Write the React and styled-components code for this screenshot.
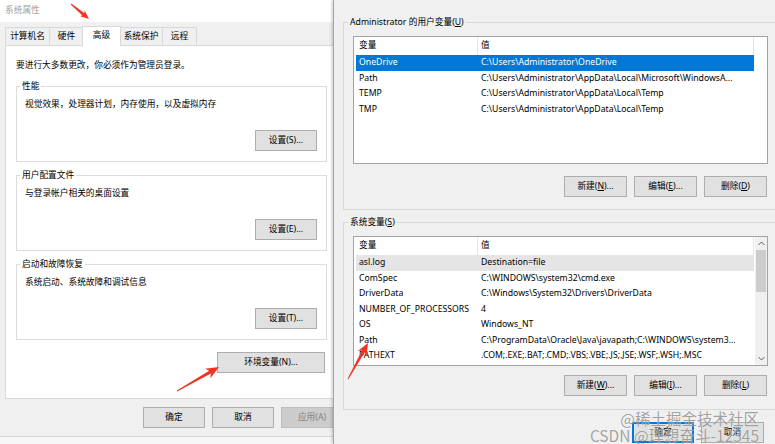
import styled, { createGlobalStyle } from "styled-components";

const GlobalStyle = createGlobalStyle`
  html, body {
    margin: 0;
    padding: 0;
  }
  body {
    width: 775px;
    height: 444px;
    overflow: hidden;
    background: #f7f7f7;
    color: #000;
    font-family: "Noto Sans", "Noto Sans CJK SC", sans-serif;
    font-size: 8.7px;
  }
`;

const Screen = styled.div`
  position: relative;
  display: flex;
  width: 775px;
  height: 444px;
  overflow: hidden;
`;

/* ---------- left: 系统属性 ---------- */

const SysWindow = styled.div`
  width: 333px;
  flex-shrink: 0;
  display: flex;
  flex-direction: column;
  overflow: hidden;
`;

const TitleBar = styled.div`
  height: 22px;
  flex-shrink: 0;
  padding-left: 5px;
  background: #fff;
  color: #a3a3a3;
  line-height: 20px;
`;

const SysBody = styled.div`
  width: 350px;
  height: 415px;
  flex-shrink: 0;
  box-sizing: border-box;
  padding: 4px 0 0 5px;
  background: #f0f0f0;
  border-bottom: 1px solid #d8d8d8;
`;

const TabStrip = styled.div`
  display: flex;
  align-items: flex-end;
  height: 19px;
`;

const Tab = styled.div`
  position: relative;
  width: ${(p) => p.$w}px;
  height: ${(p) => (p.$active ? 20 : 18)}px;
  box-sizing: border-box;
  margin: 0 ${(p) => (p.$active ? -1 : 0)}px ${(p) => (p.$active ? -1 : 0)}px
    ${(p) => (p.$active ? -2 : -1)}px;
  border: 1px solid #d9d9d9;
  border-bottom: none;
  background: ${(p) => (p.$active ? "#fff" : "#f0f0f0")};
  z-index: ${(p) => (p.$active ? 2 : 1)};
  text-align: center;
  line-height: ${(p) => (p.$active ? 16 : 17)}px;
  &:first-child {
    margin-left: 0;
  }
`;

const Panel = styled.div`
  width: 333px;
  height: 354px;
  box-sizing: border-box;
  padding: 13px 10px 0 10px;
  border: 1px solid #d9d9d9;
  background: #fff;
  display: flex;
  flex-direction: column;
`;

const Intro = styled.div`
  line-height: 12px;
  margin-bottom: 15px;
`;

const Group = styled.div`
  display: flex;
  flex-direction: column;
  width: 311px;
  height: 76px;
  box-sizing: border-box;
  margin-bottom: 13px;
  padding: 0 9px 10px 8px;
  border: 1px solid #dcdcdc;
  background: inherit;
`;

const Legend = styled.div`
  align-self: flex-start;
  margin: -7px 0 0 -5px;
  padding: 0 2px;
  line-height: 12px;
  background: inherit;
`;

const GroupText = styled.div`
  margin-top: 6px;
  line-height: 12px;
`;

const Button = styled.button`
  width: ${(p) => p.$w}px;
  height: 21px;
  flex-shrink: 0;
  box-sizing: border-box;
  padding: 0;
  border: 1px solid ${(p) => (p.$focus ? "#0078d7" : p.disabled ? "#bfbfbf" : "#adadad")};
  box-shadow: ${(p) => (p.$focus ? "inset 0 0 0 1px #0078d7" : "none")};
  background: ${(p) => (p.disabled ? "#cccccc" : "#e1e1e1")};
  color: ${(p) => (p.disabled ? "#838383" : "#000")};
  font: inherit;
  line-height: 19px;
  text-align: center;
`;

const GroupButton = styled(Button)`
  margin-top: auto;
  align-self: flex-end;
`;

const EnvButton = styled(Button)`
  align-self: flex-end;
  margin-right: 2px;
  margin-top: -1px;
`;

const ButtonRow = styled.div`
  display: flex;
  justify-content: flex-end;
  gap: ${(p) => p.$gap ?? 7}px;
  width: ${(p) => p.$w}px;
  margin-top: ${(p) => p.$mt}px;
`;

/* ---------- right: 环境变量 ---------- */

const EnvWindow = styled.div`
  flex: 1;
  position: relative;
  z-index: 3;
  box-sizing: border-box;
  padding: 22px 0 0 9px;
  border-left: 1px solid #a6a6a6;
  box-shadow: -1px 0 3px rgba(0, 0, 0, 0.22);
  background: #f0f0f0;
  overflow: hidden;
`;

const VarGroup = styled.div`
  display: flex;
  flex-direction: column;
  width: 440px;
  box-sizing: border-box;
  margin-bottom: 12px;
  padding: 0 0 ${(p) => p.$pb}px 9px;
  border: 1px solid #d7d7d7;
  background: inherit;
`;

const ListBox = styled.div`
  display: flex;
  width: 415px;
  height: ${(p) => p.$h}px;
  box-sizing: border-box;
  margin-top: 8px;
  padding-left: 2px;
  border: 1px solid #a3a3a3;
  background: #fff;
`;

const Table = styled.div`
  display: flex;
  flex-direction: column;
  width: 398px;
`;

const HeaderRow = styled.div`
  display: grid;
  grid-template-columns: 122px 276px;
  height: 18px;
`;

const HeaderCell = styled.div`
  padding-left: 3px;
  line-height: 17px;
  border-right: 1px solid #e5e5e5;
`;

const Row = styled.div`
  display: grid;
  grid-template-columns: 122px 276px;
  height: 15.5px;
  line-height: 15.5px;
  background: ${(p) => (p.$state === "selected" ? "#0078d7" : p.$state === "inactive" ? "#e5e5e5" : "transparent")};
  color: ${(p) => (p.$state === "selected" ? "#fff" : "#000")};
`;

const Cell = styled.div`
  padding-left: 3px;
  white-space: nowrap;
  overflow: hidden;
`;

const ScrollBar = styled.div`
  display: flex;
  flex-direction: column;
  width: 12px;
  margin-left: auto;
  background: #f0f0f0;
`;

const ScrollArrow = styled.div`
  display: flex;
  align-items: center;
  justify-content: center;
  height: 13px;
  flex-shrink: 0;
`;

const ScrollThumb = styled.div`
  height: 42px;
  margin: 0 1px;
  background: #cdcdcd;
`;

const ScrollTrack = styled.div`
  flex: 1;
`;

const Key = styled.u`
  text-decoration-thickness: 1px;
  text-underline-offset: 1px;
`;

/* ---------- overlays ---------- */

const Marks = styled.svg`
  position: absolute;
  left: 0;
  top: 0;
  width: 775px;
  height: 444px;
  pointer-events: none;
  z-index: 5;
`;

const Watermark = styled.div`
  position: absolute;
  right: 16px;
  bottom: 0;
  z-index: 6;
  text-align: right;
  font-family: "Noto Sans CJK SC", sans-serif;
  font-size: 15.5px;
  line-height: 17px;
  color: rgba(100, 100, 100, 0.6);
  text-shadow: 0 0 1px rgba(255, 255, 255, 0.9);
  pointer-events: none;
`;

const arrowPoints = (x1, y1, x2, y2, head) => {
  const dx = x2 - x1;
  const dy = y2 - y1;
  const len = Math.hypot(dx, dy);
  const ux = dx / len;
  const uy = dy / len;
  const nx = -uy;
  const ny = ux;
  const bx = x2 - ux * head;
  const by = y2 - uy * head;
  const nkx = x2 - ux * head * 0.8;
  const nky = y2 - uy * head * 0.8;
  const at = (x, y, w) => [x + nx * w, y + ny * w];
  const pts = [
    at(x1, y1, 0.5),
    at(nkx, nky, 1.6),
    at(bx, by, head * 0.42),
    [x2, y2],
    at(bx, by, -head * 0.42),
    at(nkx, nky, -1.6),
    at(x1, y1, -0.5),
  ];
  return pts.map(([x, y]) => `${x.toFixed(1)},${y.toFixed(1)}`).join(" ");
};

const ChevronUp = () => (
  <svg width="7" height="5" viewBox="0 0 7 5">
    <polyline points="0.5,4 3.5,1 6.5,4" fill="none" stroke="#606060" strokeWidth="1" />
  </svg>
);

const ChevronDown = () => (
  <svg width="7" height="5" viewBox="0 0 7 5">
    <polyline points="0.5,1 3.5,4 6.5,1" fill="none" stroke="#606060" strokeWidth="1" />
  </svg>
);

const userVars = [
  ["OneDrive", "C:\\Users\\Administrator\\OneDrive", "selected"],
  ["Path", "C:\\Users\\Administrator\\AppData\\Local\\Microsoft\\WindowsA..."],
  ["TEMP", "C:\\Users\\Administrator\\AppData\\Local\\Temp"],
  ["TMP", "C:\\Users\\Administrator\\AppData\\Local\\Temp"],
];

const systemVars = [
  ["asl.log", "Destination=file", "inactive"],
  ["ComSpec", "C:\\WINDOWS\\system32\\cmd.exe"],
  ["DriverData", "C:\\Windows\\System32\\Drivers\\DriverData"],
  ["NUMBER_OF_PROCESSORS", "4"],
  ["OS", "Windows_NT"],
  ["Path", "C:\\ProgramData\\Oracle\\Java\\javapath;C:\\WINDOWS\\system3..."],
  ["PATHEXT", ".COM;.EXE;.BAT;.CMD;.VBS;.VBE;.JS;.JSE;.WSF;.WSH;.MSC"],
];

const tabs = [
  ["计算机名", 45],
  ["硬件", 35],
  ["高级", 39, true],
  ["系统保护", 44],
  ["远程", 35],
];

const groups = [
  ["性能", "视觉效果，处理器计划，内存使用，以及虚拟内存", "设置(S)..."],
  ["用户配置文件", "与登录帐户相关的桌面设置", "设置(E)..."],
  ["启动和故障恢复", "系统启动、系统故障和调试信息", "设置(T)..."],
];

const VarList = ({ rows, height, scroll }) => (
  <ListBox $h={height}>
    <Table>
      <HeaderRow>
        <HeaderCell>变量</HeaderCell>
        <HeaderCell>值</HeaderCell>
      </HeaderRow>
      {rows.map(([name, value, state]) => (
        <Row key={name} $state={state}>
          <Cell>{name}</Cell>
          <Cell>{value}</Cell>
        </Row>
      ))}
    </Table>
    {scroll && (
      <ScrollBar>
        <ScrollArrow>
          <ChevronUp />
        </ScrollArrow>
        <ScrollThumb />
        <ScrollTrack />
        <ScrollArrow>
          <ChevronDown />
        </ScrollArrow>
      </ScrollBar>
    )}
  </ListBox>
);

const Access = ({ label, k, tail = "" }) => (
  <>
    {label}(<Key>{k}</Key>){tail}
  </>
);

export default function App() {
  return (
    <>
      <GlobalStyle />
      <Screen>
        <SysWindow>
          <TitleBar>系统属性</TitleBar>
          <SysBody>
            <TabStrip>
              {tabs.map(([name, w, active]) => (
                <Tab key={name} $w={w} $active={active}>
                  {name}
                </Tab>
              ))}
            </TabStrip>
            <Panel>
              <Intro>要进行大多数更改，你必须作为管理员登录。</Intro>
              {groups.map(([title, text, btn]) => (
                <Group key={title}>
                  <Legend>{title}</Legend>
                  <GroupText>{text}</GroupText>
                  <GroupButton $w={62}>{btn}</GroupButton>
                </Group>
              ))}
              <EnvButton $w={108}>环境变量(N)...</EnvButton>
            </Panel>
            <ButtonRow $w={338} $mt={8} $gap={7}>
              <Button $w={62}>确定</Button>
              <Button $w={62}>取消</Button>
              <Button $w={62} disabled>
                应用(A)
              </Button>
            </ButtonRow>
          </SysBody>
        </SysWindow>

        <EnvWindow>
          <VarGroup $pb={12}>
            <Legend>
              Administrator 的用户变量(<Key>U</Key>)
            </Legend>
            <VarList rows={userVars} height={128} />
            <ButtonRow $w={414} $mt={12}>
              <Button $w={63}>
                <Access label="新建" k="N" tail="..." />
              </Button>
              <Button $w={63}>
                <Access label="编辑" k="E" tail="..." />
              </Button>
              <Button $w={63}>
                <Access label="删除" k="D" />
              </Button>
            </ButtonRow>
          </VarGroup>
          <VarGroup $pb={13}>
            <Legend>
              系统变量(<Key>S</Key>)
            </Legend>
            <VarList rows={systemVars} height={130} scroll />
            <ButtonRow $w={414} $mt={9}>
              <Button $w={63}>
                <Access label="新建" k="W" tail="..." />
              </Button>
              <Button $w={63}>
                <Access label="编辑" k="I" tail="..." />
              </Button>
              <Button $w={63}>
                <Access label="删除" k="L" />
              </Button>
            </ButtonRow>
          </VarGroup>
          <ButtonRow $w={421} $mt={2}>
            <Button $w={62} $focus>
              确定
            </Button>
            <Button $w={63}>取消</Button>
          </ButtonRow>
        </EnvWindow>

        <Marks viewBox="0 0 775 444">
          <polygon points={arrowPoints(71, 4, 89, 19, 9)} fill="#ee3524" />
          <polygon points={arrowPoints(177, 391, 219, 367, 13)} fill="#ee3524" />
          <polygon points={arrowPoints(348, 379, 368, 343, 12)} fill="#ee3524" />
        </Marks>
        <Watermark>
          <div>@稀土掘金技术社区</div>
          <div>CSDN @理想奋斗-12345</div>
        </Watermark>
      </Screen>
    </>
  );
}
